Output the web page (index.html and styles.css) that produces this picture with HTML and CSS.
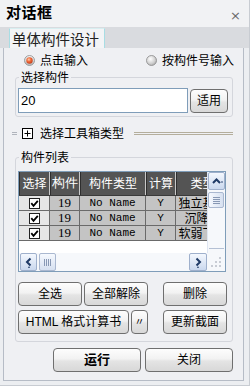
FILE: index.html
```html
<!DOCTYPE html>
<html>
<head>
<meta charset="utf-8">
<link rel="stylesheet" href="styles.css">
</head>
<body>
<div class="window">
  <div class="titlebar">
    <span class="title">对话框</span>
    <span class="close">×</span>
  </div>
  <div class="tabstrip">
    <div class="tab">单体构件设计</div>
  </div>
  <div class="panel">
    <div class="radios">
      <label class="radio rad1">
        <svg width="11" height="11" viewBox="0 0 11 11"><defs><radialGradient id="ro" cx="0.4" cy="0.35" r="0.7"><stop offset="0" stop-color="#ffd0b0"/><stop offset="0.45" stop-color="#f06a3a"/><stop offset="1" stop-color="#c03a18"/></radialGradient><linearGradient id="rg" x1="0" y1="0" x2="0" y2="1"><stop offset="0" stop-color="#f4f4f4"/><stop offset="1" stop-color="#b8b8b8"/></linearGradient></defs><circle cx="5.5" cy="5.5" r="5" fill="url(#rg)" stroke="#8a8a8a" stroke-width="0.8"/><circle cx="5.5" cy="5.5" r="3.2" fill="url(#ro)"/></svg>
        <span>点击输入</span>
      </label>
      <label class="radio rad2">
        <svg width="11" height="11" viewBox="0 0 11 11"><defs><radialGradient id="rg2" cx="0.4" cy="0.35" r="0.75"><stop offset="0" stop-color="#ffffff"/><stop offset="0.6" stop-color="#d0d0d0"/><stop offset="1" stop-color="#a0a0a0"/></radialGradient></defs><circle cx="5.5" cy="5.5" r="5" fill="url(#rg2)" stroke="#8a8a8a" stroke-width="0.8"/></svg>
        <span>按构件号输入</span>
      </label>
    </div>

    <fieldset class="group g1">
      <legend>选择构件</legend>
      <div class="inputrow">
        <div class="textbox">20</div>
        <button class="btn apply">适用</button>
      </div>
    </fieldset>

    <div class="toolrow">
      <span class="grip"></span>
      <svg class="plus" width="11" height="11" viewBox="0 0 11 11"><rect x="0.5" y="0.5" width="10" height="10" fill="#fff" stroke="#000"/><path d="M2.5 5.5H8.5M5.5 2.5V8.5" stroke="#000" stroke-width="1"/></svg>
      <span class="tooltext">选择工具箱类型</span>
      <span class="dline"></span>
    </div>

    <fieldset class="group g2">
      <legend>构件列表</legend>
      <div class="tablebox">
        <div class="tablemain">
          <div class="grid">
            <div class="row head">
              <div class="c c1">选择</div>
              <div class="c c2">构件</div>
              <div class="c c3">构件类型</div>
              <div class="c c4">计算</div>
              <div class="c c5">类型</div>
            </div>
            <div class="row">
              <div class="c c1 chk"><svg width="11" height="11" viewBox="0 0 11 11"><rect x="0.5" y="0.5" width="10" height="10" fill="#fff" stroke="#222"/><path d="M2.3 5.2L4.5 7.8L8.8 2.8" fill="none" stroke="#000" stroke-width="1.8"/></svg></div>
              <div class="c c2">19</div>
              <div class="c c3 mono">No Name</div>
              <div class="c c4 mono">Y</div>
              <div class="c c5">独立基础</div>
            </div>
            <div class="row">
              <div class="c c1 chk"><svg width="11" height="11" viewBox="0 0 11 11"><rect x="0.5" y="0.5" width="10" height="10" fill="#fff" stroke="#222"/><path d="M2.3 5.2L4.5 7.8L8.8 2.8" fill="none" stroke="#000" stroke-width="1.8"/></svg></div>
              <div class="c c2">19</div>
              <div class="c c3 mono">No Name</div>
              <div class="c c4 mono">Y</div>
              <div class="c c5">沉降缝</div>
            </div>
            <div class="row">
              <div class="c c1 chk"><svg width="11" height="11" viewBox="0 0 11 11"><rect x="0.5" y="0.5" width="10" height="10" fill="#fff" stroke="#222"/><path d="M2.3 5.2L4.5 7.8L8.8 2.8" fill="none" stroke="#000" stroke-width="1.8"/></svg></div>
              <div class="c c2">19</div>
              <div class="c c3 mono">No Name</div>
              <div class="c c4 mono">Y</div>
              <div class="c c5">软弱下卧</div>
            </div>
          </div>
          <div class="vscroll">
            <div class="sbtn up"><svg width="12" height="8" viewBox="0 0 12 8"><path d="M2 6L5.5 2.5L9 6" fill="none" stroke="#1f3a66" stroke-width="2"/><circle cx="11" cy="5" r="0.8" fill="#1f3a66"/></svg></div>
            <div class="vthumb"><span></span><span></span><span></span><span></span></div>
            <div class="vtrack"></div>
            <div class="vend"></div>
          </div>
        </div>
        <div class="hbar">
          <div class="hscroll">
            <div class="sbtn left"><svg width="10" height="12" viewBox="0 0 10 12"><path d="M6.5 2.5L3 6L6.5 9.5" fill="none" stroke="#1f3a66" stroke-width="2"/><circle cx="5" cy="11.3" r="0.8" fill="#1f3a66"/></svg></div>
            <div class="hthumb"><span></span><span></span><span></span><span></span></div>
            <div class="htrack"></div>
            <div class="sbtn right"><svg width="10" height="12" viewBox="0 0 10 12"><path d="M3.5 2.5L7 6L3.5 9.5" fill="none" stroke="#1f3a66" stroke-width="2"/><circle cx="5" cy="11.3" r="0.8" fill="#1f3a66"/></svg></div>
          </div>
          <div class="sizegrip"><svg width="18" height="18" viewBox="0 0 18 18"><g fill="#c8ccd4"><rect x="12" y="4" width="2" height="2"/><rect x="8" y="8" width="2" height="2"/><rect x="12" y="8" width="2" height="2"/><rect x="4" y="12" width="2" height="2"/><rect x="8" y="12" width="2" height="2"/><rect x="12" y="12" width="2" height="2"/></g></svg></div>
        </div>
      </div>

      <div class="btnrow br1">
        <button class="btn w64">全选</button>
        <button class="btn w64 ml2">全部解除</button>
        <button class="btn w64 ml15">删除</button>
      </div>
      <div class="btnrow br2">
        <button class="btn w111">HTML 格式计算书</button>
        <button class="btn w17 ml2">〃</button>
        <button class="btn w64 ml15">更新截面</button>
      </div>
    </fieldset>

    <div class="bottom">
      <button class="btn big bold">运行</button>
      <button class="btn big">关闭</button>
    </div>
  </div>
</div>
</body>
</html>
```

FILE: styles.css
```css
* { box-sizing: border-box; }
html, body { margin: 0; padding: 0; }
body {
  width: 250px;
  height: 386px;
  overflow: hidden;
  font-family: "Noto Sans CJK SC", "Liberation Sans", sans-serif;
  font-size: 12px;
  color: #000;
  background: #f0f0f0;
}
.window {
  width: 250px;
  height: 386px;
  background: #eceef1;
  border-right: 1px solid #c8ccd2;
  border-bottom: 1px solid #c8ccd2;
  display: flex;
  flex-direction: column;
}
.titlebar {
  height: 27px;
  display: flex;
  align-items: flex-start;
  justify-content: space-between;
  padding: 2px 8px 0 6px;
  background: #f1f2f4;
}
.title {
  font-weight: bold;
  font-size: 15px;
  line-height: 20px;
  letter-spacing: 0.5px;
}
.close {
  font-family: "DejaVu Sans", sans-serif;
  font-size: 13px;
  line-height: 13px;
  margin-top: 7px;
  color: #6a6a6a;
}
.tabstrip {
  height: 21px;
  background: #d9dbdf;
  padding: 1px 0 0 9px;
  display: flex;
}
.tab {
  width: 96px;
  height: 20px;
  background: #f3f4f6;
  border-left: 1px solid #a8dde4;
  border-right: 1px solid #a8dde4;
  border-top: 1px solid #d8eef0;
  font-size: 14.5px;
  line-height: 19px;
  padding-left: 2px;
  color: #222;
  white-space: nowrap;
  overflow: hidden;
}
.panel {
  margin-left: 3px;
  width: 241px;
  height: 333px;
  border: 1px solid #b6bcc6;
  border-top: none;
  background: #eff0f3;
  display: flex;
  flex-direction: column;
}
.radios {
  display: flex;
  height: 16px;
  margin-top: 4px;
  align-items: center;
}
.radio {
  display: flex;
  align-items: center;
  line-height: 16px;
}
.radio svg { margin-right: 5px; }
.rad1 { margin-left: 20px; }
.rad2 { margin-left: auto; margin-right: 9px; }

.group {
  margin: 0 0 0 11px;
  width: 218px;
  border: 1px solid #d4d6dc;
  border-radius: 3px;
  padding: 0 2px;
  min-width: 0;
}
.group legend {
  padding: 0 2px 0 2px;
  margin-left: 1px;
  font-size: 12px;
  line-height: 14px;
  height: 14px;
}
.g1 { margin-top: 2px; padding-top: 4px; padding-bottom: 3px; }
.inputrow { display: flex; align-items: flex-start; }
.textbox {
  width: 170px;
  height: 25px;
  border: 1px solid #7f9db9;
  background: #fff;
  font-family: "Liberation Sans", sans-serif;
  font-size: 13px;
  line-height: 23px;
  padding-left: 2px;
}
.btn {
  font-family: "Liberation Sans", "Noto Sans CJK SC", sans-serif;
  font-size: 12px;
  color: #000;
  border: 1px solid #6f6f6f;
  border-radius: 4px;
  background: linear-gradient(#fdfdfd 0%, #f2f2f2 45%, #e4e4e4 55%, #d8d8d8 100%);
  padding: 0;
  margin: 0;
  height: 24px;
  line-height: 20px;
  white-space: nowrap;
}
.apply { width: 38px; margin: 1px 0 0 2px; }

.toolrow {
  display: flex;
  align-items: center;
  height: 14px;
  margin-top: 9px;
}
.grip {
  width: 5px;
  height: 3px;
  margin-left: 8px;
  border-top: 1px solid #b0b4bc;
  border-bottom: 1px solid #b0b4bc;
}
.plus { margin-left: 5px; }
.tooltext { margin-left: 7px; line-height: 14px; }
.dline {
  margin-left: 10px;
  width: 99px;
  height: 3px;
  border-top: 1px solid #b4ae9c;
  border-bottom: 1px solid #b4ae9c;
}
.g2 { margin-top: 10px; padding-top: 7px; padding-bottom: 7px; }

.tablebox {
  width: 208px;
  height: 101px;
  border: 1px solid #7f9db9;
  background: #fff;
  display: flex;
  flex-direction: column;
}
.tablemain { display: flex; height: 81px; }
.grid {
  width: 188px;
  height: 81px;
  overflow: hidden;
  background: #fff;
}
.row {
  display: flex;
  height: 15px;
  border-bottom: 1px solid #6a6a6a;
  background: #c4c4c4;
  width: 210px;
}
.row.head {
  height: 24px;
  background: #545454;
  color: #fff;
  border-bottom: 1px solid #3a3a3a;
}
.c {
  flex: none;
  text-align: center;
  overflow: hidden;
  white-space: nowrap;
  border-right: 1px solid #6a6a6a;
  line-height: 14px;
  font-size: 12px;
}
.head .c {
  line-height: 22px;
  border-right: 1px solid #c8c8c8;
  border-left: 1px solid #2e2e2e;
}
.c1 { width: 31px; }
.c2 { width: 30px; }
.c3 { width: 66px; }
.c4 { width: 30px; }
.c5 { width: 53px; border-right: none; }
.chk { background: #e6e6e6; display: flex; justify-content: center; align-items: center; }
.mono { font-family: "Liberation Mono", monospace; font-size: 11px; color: #000; }
.row .c2 { font-family: "Liberation Serif", serif; font-size: 13px; }

.vscroll {
  width: 18px;
  height: 81px;
  background: #f6f8fb;
  display: flex;
  flex-direction: column;
  border-left: 1px solid #dfe6f2;
}
.sbtn {
  background: linear-gradient(#f4f8fe, #cad8ee);
  border: 1px solid #9fb0cc;
  border-radius: 2px;
  display: flex;
  align-items: center;
  justify-content: center;
}
.up { height: 18px; width: 17px; }
.vthumb {
  margin-top: 2px;
  height: 16px;
  width: 16px;
  background: linear-gradient(90deg, #f6f9fe, #d6e0f0);
  border: 1px solid #aab8d0;
  border-radius: 2px;
  display: flex;
  flex-direction: column;
  align-items: center;
  justify-content: center;
  gap: 1px;
}
.vthumb span { width: 7px; height: 1px; background: #8898b4; }
.vtrack { flex: 1; }
.vend { height: 5px; border-top: 1px solid #b4c0d4; margin: 0 1px; }
.hbar { display: flex; height: 18px; }
.hscroll {
  width: 188px;
  height: 18px;
  display: flex;
  align-items: stretch;
  background: #f6f8fb;
  padding-left: 1px;
}
.left { width: 17px; }
.right { width: 18px; }
.hthumb {
  margin-left: 2px;
  width: 17px;
  background: linear-gradient(#f6f9fe, #d6e0f0);
  border: 1px solid #aab8d0;
  border-radius: 2px;
  display: flex;
  align-items: center;
  justify-content: center;
  gap: 1px;
}
.hthumb span { width: 1px; height: 7px; background: #8898b4; }
.htrack { flex: 1; }
.sizegrip { width: 18px; height: 18px; background: #f6f8fb; }

.btnrow { display: flex; }
.btnrow.br1 { margin-top: 10px; }
.btnrow.br2 { margin-top: 4px; }
.w64 { width: 64px; }
.w111 { width: 111px; font-size: 12px; }
.w17 { width: 17px; font-size: 10px; }
.ml2 { margin-left: 2px; }
.ml15 { margin-left: 15px; }

.bottom {
  display: flex;
  margin-top: 6px;
  padding-left: 49px;
  gap: 4px;
}
.big { width: 88px; height: 24px; }
.bold { font-weight: bold; font-size: 13px; }
```
